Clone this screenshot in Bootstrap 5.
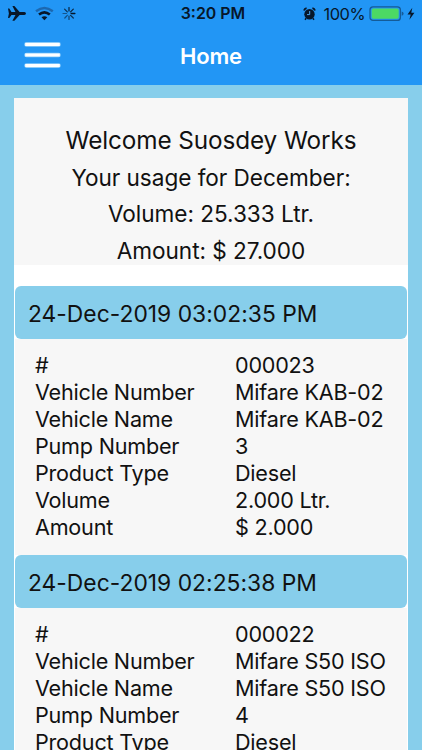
<!DOCTYPE html>
<html lang="en">
<head>
<meta charset="utf-8">
<meta name="viewport" content="width=device-width, initial-scale=1">
<title>Home</title>
<link href="https://cdn.jsdelivr.net/npm/bootstrap@5.3.0/dist/css/bootstrap.min.css" rel="stylesheet">
<style>
  html, body { height: 100%; }
  body { font-family: Inter, "Liberation Sans", sans-serif; background: #87ceeb; color: #111; overflow: hidden; }
  .top-area { height: 85px; background: #2296f5; }
  .status { height: 28px; color: #07172a; line-height: 28px; }
  .status svg, .menu-btn svg { display: block; flex: none; }
  .side { width: 158px; }
  .clock { font-size: 15.9px; font-weight: 600; letter-spacing: 0; padding-left: 4px; }
  .charge { font-size: 16.4px; letter-spacing: -.5px; }
  .title-bar { height: 56px; }
  .menu-btn { width: 86px; padding-left: 24px; }
  .page-title { font-size: 22px; font-weight: 600; line-height: 56px; letter-spacing: -.2px; }
  .sheet { margin: 13px 14px 0; background: #fff; white-space: nowrap; }
  .summary { height: 167px; padding-top: 23px; background: #f7f7f7; }
  .summary p { font-size: 22.6px; line-height: 36.4px; letter-spacing: -.04px; }
  .summary h1 { font-size: 24.3px; line-height: 39px; font-weight: 400; letter-spacing: -.1px; }
  .entries { margin-top: 21px; padding: 0 1px; }
  .stamp { height: 53px; line-height: 55px; padding-left: 13px; border-radius: 6px; background: #87ceeb; font-size: 22.8px; letter-spacing: .03px; }
  .details { height: 216px; padding: 13px 0 14px 20px; background: #f7f7f7; font-size: 21.6px; line-height: 27px; letter-spacing: -.22px; }
  .details dt { width: 200px; font-weight: 400; }
</style>
</head>
<body>
<header class="top-area">
  <div class="status d-flex justify-content-between align-items-center">
    <div class="side d-flex align-items-center">
      <svg width="84" height="28" viewBox="0 0 84 28">
        <path fill="#07172a" d="M8 8.5h1.3l2.2 3.4h4L12.4 6h2l5.2 5.9h4.7c2.2 0 2.2 3 0 3h-4.7l-5.2 5.9h-2l3.1-5.9h-4L9.3 18H8l.9-4.6z"/>
        <g fill="none" stroke-width="2.4">
          <path stroke="#1c68b0" d="M36 11.3q8.4-6.7 16.8 0"/>
          <path stroke="#07172a" stroke-width="2.6" d="M39 14.6q5.4-4.4 10.8 0"/>
        </g>
        <path fill="#07172a" d="M44.4 20.2l-2.9-3q2.9-2 5.8 0z"/>
        <g stroke="#07172a" stroke-width="1.2" stroke-linecap="round">
          <path d="M71.2 13.5h3.6" stroke-width="1.5"/>
          <path opacity=".8" d="M70.6 15.3l2.7 2.7"/>
          <path opacity=".65" d="M69 16v3.4"/>
          <path opacity=".55" d="M67.3 15.3L64.8 18"/>
          <path opacity=".5" d="M66.5 13.5H63"/>
          <path opacity=".8" d="M67.3 11.8l-2.7-2.7"/>
          <path opacity=".9" d="M69 11V7.6"/>
          <path opacity=".9" d="M70.6 11.8l2.7-2.7"/>
        </g>
      </svg>
    </div>
    <div class="clock">3:20 PM</div>
    <div class="side d-flex align-items-center justify-content-end">
      <svg width="13" height="14" viewBox="0 0 13 14">
        <g fill="none" stroke="#07172a"><path stroke-width="1.6" d="M.9 3.6Q1.5 1.6 3.6 1.1M9.4 1.1q2.1.5 2.7 2.5"/><path stroke-width="1.5" d="M3.2 11.3L2 12.8m7.8-1.5l1.2 1.5"/></g>
        <circle cx="6.5" cy="7.2" r="5.2" fill="#07172a"/>
        <path fill="none" stroke="#4aa5ee" stroke-width="1" d="M6.7 4v3.6H4"/>
      </svg>
      <span class="charge ms-2">100%</span>
      <svg class="ms-1" width="53" height="28" viewBox="0 0 53 28">
        <rect x="1" y="6.8" width="30.4" height="13.6" rx="3" fill="none" stroke="#145b98" stroke-width="1.3"/>
        <rect x="2.7" y="8.5" width="27" height="10.2" rx="1.6" fill="#4cd964"/>
        <path fill="#145b98" d="M32.7 11.5q1.9.4 1.9 2.1t-1.9 2.1z"/>
        <path fill="#07172a" d="M43.3 7.7l-4.8 6.8h3.2l-1.3 5.3 5-7h-3.1z"/>
      </svg>
    </div>
  </div>
  <nav class="title-bar d-flex justify-content-between">
    <div class="menu-btn">
      <svg width="38" height="56" viewBox="0 0 38 56">
        <g stroke="#8dccfa" stroke-width="4.6" stroke-linecap="round"><path d="M2.5 16.4h32M2.5 27h32M2.5 37.6h32"/></g>
        <g stroke="#fff" stroke-width="3"><path d="M1.2 16.4h34.6M1.2 27h34.6M1.2 37.6h34.6"/></g>
      </svg>
    </div>
    <div class="page-title text-white">Home</div>
    <div class="menu-btn"></div>
  </nav>
</header>
<main class="sheet">
  <section class="summary text-center">
    <h1 class="m-0">Welcome Suosdey Works</h1>
    <p class="m-0">Your usage for December:</p>
    <p class="m-0">Volume: 25.333 Ltr.</p>
    <p class="m-0">Amount: $ 27.000</p>
  </section>
  <section class="entries">
    <div class="stamp">24-Dec-2019 03:02:35 PM</div>
    <dl class="details m-0">
      <div class="d-flex"><dt>#</dt><dd class="m-0">000023</dd></div>
      <div class="d-flex"><dt>Vehicle Number</dt><dd class="m-0">Mifare KAB-02</dd></div>
      <div class="d-flex"><dt>Vehicle Name</dt><dd class="m-0">Mifare KAB-02</dd></div>
      <div class="d-flex"><dt>Pump Number</dt><dd class="m-0">3</dd></div>
      <div class="d-flex"><dt>Product Type</dt><dd class="m-0">Diesel</dd></div>
      <div class="d-flex"><dt>Volume</dt><dd class="m-0">2.000 Ltr.</dd></div>
      <div class="d-flex"><dt>Amount</dt><dd class="m-0">$ 2.000</dd></div>
    </dl>
    <div class="stamp">24-Dec-2019 02:25:38 PM</div>
    <dl class="details m-0">
      <div class="d-flex"><dt>#</dt><dd class="m-0">000022</dd></div>
      <div class="d-flex"><dt>Vehicle Number</dt><dd class="m-0">Mifare S50 ISO</dd></div>
      <div class="d-flex"><dt>Vehicle Name</dt><dd class="m-0">Mifare S50 ISO</dd></div>
      <div class="d-flex"><dt>Pump Number</dt><dd class="m-0">4</dd></div>
      <div class="d-flex"><dt>Product Type</dt><dd class="m-0">Diesel</dd></div>
    </dl>
  </section>
</main>
<script src="https://cdn.jsdelivr.net/npm/bootstrap@5.3.0/dist/js/bootstrap.bundle.min.js"></script>
</body>
</html>
